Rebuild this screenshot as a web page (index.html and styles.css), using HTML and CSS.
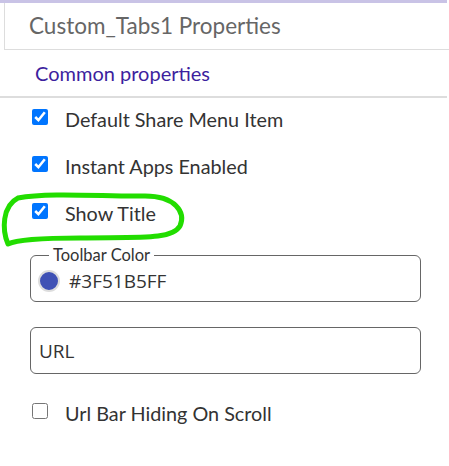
FILE: index.html
```html
<!DOCTYPE html>
<html lang="en">
<head>
  <meta charset="UTF-8">
  <title>Custom_Tabs1 Properties</title>
  <link rel="stylesheet" href="styles.css">
</head>
<body>
  <div class="panel">
    <div class="topbar"></div>
    <div class="header">Custom_Tabs1 Properties</div>
    <div class="section">Common properties</div>

    <div class="props">
      <label class="check-row">
        <input type="checkbox" checked>
        <span>Default Share Menu Item</span>
      </label>
      <label class="check-row">
        <input type="checkbox" checked>
        <span>Instant Apps Enabled</span>
      </label>
      <label class="check-row">
        <input type="checkbox" checked>
        <span>Show Title</span>
      </label>

      <fieldset class="field">
        <legend>Toolbar Color</legend>
        <span class="swatch"></span>
        <span class="value">#3F51B5FF</span>
      </fieldset>

      <div class="field plain">
        <span class="value">URL</span>
      </div>

      <label class="check-row last">
        <input type="checkbox">
        <span>Url Bar Hiding On Scroll</span>
      </label>
    </div>

    <!-- hand drawn highlight -->
    <svg class="scribble" width="200" height="70" viewBox="0 180 200 70">
      <path d="M8 244 C2 230 2 206 18 198 C50 192 110 197 145 196 C175 196 186 212 180 226 C172 240 140 237 80 238 C40 238 16 240 8 244" fill="none" stroke="#22dd00" stroke-width="5" stroke-linecap="round"/>
    </svg>
  </div>
</body>
</html>
```

FILE: styles.css
```css
body {
  margin: 0;
  background: #fff;
  font-family: Lato, "Noto Sans", sans-serif;
  color: #333;
}

.panel {
  position: relative;
  width: 449px;
}

.topbar {
  height: 3px;
  width: 447px;
  background: #c9c3e6;
}

.header {
  margin-left: 4px;
  height: 44px;
  padding: 0 0 2px 24px;
  border-left: 1px solid #ddd;
  border-bottom: 1px solid #ddd;
  display: flex;
  align-items: center;
  font-size: 22.5px;
  color: #666;
}

.section {
  width: 412px;
  height: 46px;
  padding-left: 35px;
  border-bottom: 2px solid #ddd;
  display: flex;
  align-items: center;
  font-size: 20px;
  color: #3d1f9e;
}

.props {
  margin-top: -3px;
  padding: 0 28px 0 30px;
}

.check-row {
  height: 47px;
  display: flex;
  align-items: center;
  gap: 17px;
  font-size: 19.8px;
  color: #333;
}

.check-row input {
  width: 16px;
  height: 16px;
  margin: -3px 0 0 2px;
  accent-color: #0075ff;
}

.check-row.last {
  margin-top: 15px;
}

.field {
  margin: 0;
  height: 47px;
  box-sizing: border-box;
  border: 1px solid #666;
  border-radius: 6px;
  padding: 0 0 0 7px;
  display: flex;
  align-items: center;
  gap: 9px;
}

fieldset.field {
  height: 54px;
  margin-top: 12px;
  padding-top: 0;
}

.field legend {
  font-size: 16.5px;
  color: #333;
  padding: 0 4px;
  margin-left: 11px;
  line-height: 14px;
}

.field.plain {
  margin-top: 25px;
  padding-left: 8px;
}

.swatch {
  width: 18px;
  height: 18px;
  border-radius: 50%;
  background: #3f51b5;
  border: 2px solid #ddd;
  margin-top: -2px;
}

.value {
  font-family: "Open Sans", "Noto Sans", sans-serif;
  font-size: 19px;
  color: #333;
}

fieldset .value {
  margin-top: -2px;
}

.scribble {
  position: absolute;
  left: 0;
  top: 180px;
}
```
